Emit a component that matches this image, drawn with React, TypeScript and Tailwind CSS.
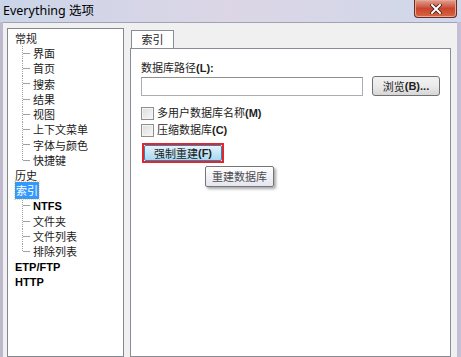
import React from "react";

const CJK = '"Noto Sans CJK SC", "Liberation Sans", sans-serif';
const LATIN = '"Liberation Sans", "Noto Sans CJK SC", sans-serif';

type Node = { label: string; bold?: boolean; selected?: boolean; children?: string[]; boldChildren?: string[] };

const TREE: Node[] = [
  { label: "常规", children: ["界面", "首页", "搜索", "结果", "视图", "上下文菜单", "字体与颜色", "快捷键"] },
  { label: "历史" },
  { label: "索引", selected: true, children: ["NTFS", "文件夹", "文件列表", "排除列表"], boldChildren: ["NTFS"] },
  { label: "ETP/FTP", bold: true },
  { label: "HTTP", bold: true },
];

function Connector({ last }: { last: boolean }) {
  return (
    <svg width="11" height="15.25" className="shrink-0">
      <line x1="0.5" y1="0" x2="0.5" y2={last ? 8 : 15.25} stroke="#a0a0a0" strokeDasharray="1 1" />
      <line x1="1" y1="7.5" x2="8" y2="7.5" stroke="#a0a0a0" />
    </svg>
  );
}

function Row({ text, bold, selected }: { text: string; bold?: boolean; selected?: boolean }) {
  const latin = /^[A-Z/]+$/.test(text);
  return (
    <span
      className={
        "whitespace-nowrap text-[11px] " +
        (bold ? "font-bold text-black " : "text-[#1a1a1a] ") +
        (selected ? "bg-[#3399ff] px-[1px] text-white outline outline-1 outline-dotted outline-[#f5d98a]" : "")
      }
      style={{ fontFamily: latin ? LATIN : CJK }}
    >
      {text}
    </span>
  );
}

// CJK text followed by a bold latin hotkey part, as in the dialog
function Label({ cjk, key_ }: { cjk: string; key_: string }) {
  return (
    <>
      <span style={{ fontFamily: CJK }}>{cjk}</span>
      <span className="font-bold" style={{ fontFamily: LATIN }}>
        {key_}
      </span>
    </>
  );
}

function Checkbox({ cjk, key_ }: { cjk: string; key_: string }) {
  return (
    <div className="flex h-[14px] items-center gap-[3px]">
      <span className="h-[13px] w-[13px] border border-[#8f8f8f] bg-gradient-to-br from-[#dcdcdc] to-[#f8f8f8] shadow-[inset_0_0_0_1px_#f4f4f4]" />
      <span className="text-[11px] text-[#222]">
        <Label cjk={cjk} key_={key_} />
      </span>
    </div>
  );
}

export default function App() {
  return (
    <div className="flex h-[357px] w-[461px] flex-col overflow-hidden bg-gradient-to-r from-[#bdb8cc] via-[#d6d3e2] to-[#c4bfd4]">
      {/* title bar */}
      <div className="flex h-[22px] shrink-0 items-start justify-between bg-gradient-to-r from-[#cbd5e8] via-[#dcd6e6] to-[#cfd8ea]">
        <span className="pl-[3px] pt-[3px] text-[12.5px] leading-[16px] text-black" style={{ fontFamily: '"Noto Sans", "Noto Sans CJK SC", sans-serif' }}>
          Everything 选项
        </span>
        <div className="mr-[4px] flex h-[18px] w-[43px] items-center justify-center rounded-b-[4px] border border-t-0 border-[#6b2a22] bg-gradient-to-b from-[#e0a092] via-[#c9452e] to-[#d6653f] shadow-[inset_0_0_0_1px_#e7a796]">
          <svg width="12" height="10" viewBox="0 0 12 10">
            <path d="M2 1 L10 9 M10 1 L2 9" stroke="#3a1a16" strokeWidth="3.6" strokeLinecap="square" />
            <path d="M2 1 L10 9 M10 1 L2 9" stroke="#ffffff" strokeWidth="2" strokeLinecap="square" />
          </svg>
        </div>
      </div>

      {/* client area */}
      <div className="mx-[3px] mr-[4px] flex flex-1 gap-[6px] border-t border-[#9fa3b4] bg-[#f0f0f0] pl-[4px] pr-[6px] pt-[5px]">
        {/* tree */}
        <div className="w-[117px] shrink-0 border border-[#828790] bg-white pt-[1.5px]">
          {TREE.map((n) => (
            <div key={n.label}>
              <div className="flex h-[15.25px] items-center pl-[7px]">
                <Row text={n.label} bold={n.bold} selected={n.selected} />
              </div>
              {n.children && (
                <div className="pl-[14px]">
                  {n.children.map((c, i) => (
                    <div key={c} className="flex h-[15.25px] items-center">
                      <Connector last={i === n.children!.length - 1} />
                      <Row text={c} bold={n.boldChildren?.includes(c)} />
                    </div>
                  ))}
                </div>
              )}
            </div>
          ))}
        </div>

        {/* tab area */}
        <div className="flex flex-1 flex-col pt-[2px]">
          <div className="ml-[1px] flex h-[18px] w-[43px] items-center justify-center border border-b-0 border-[#898c95] bg-white">
            <span className="text-[11px] text-[#222]" style={{ fontFamily: CJK }}>
              索引
            </span>
          </div>
          <div className="flex-1 border border-[#898c95] bg-white pl-[10px] pt-[11px]">
            <div className="h-[15px] text-[11px] leading-[15px] text-[#222]">
              <Label cjk="数据库路径" key_="(L):" />
            </div>
            <div className="mt-[1px] flex items-center gap-[9px]">
              <div className="h-[19px] w-[222px] border border-[#abadb3] border-t-[#8e8f8f] bg-white" />
              <button className="flex h-[20px] w-[68px] items-center justify-center rounded-[3px] border border-[#707070] bg-gradient-to-b from-[#f2f2f2] via-[#ebebeb] to-[#d6d6d6] text-[11px] text-[#222]">
                <Label cjk="浏览" key_="(B)..." />
              </button>
            </div>
            <div className="mt-[10px] flex flex-col gap-[3px]">
              <Checkbox cjk="多用户数据库名称" key_="(M)" />
              <Checkbox cjk="压缩数据库" key_="(C)" />
            </div>
            <div className="relative ml-[1px] mt-[6px] w-[82px] border-2 border-[#e3262c]">
              <button className="flex h-[16px] w-full items-center justify-center rounded-[2px] border border-[#3c7fb1] bg-gradient-to-b from-[#e5f4fc] via-[#c4e5f6] to-[#a8d8f2] text-[11px] text-[#222]">
                <Label cjk="强制重建" key_="(F)" />
              </button>
              <div
                className="absolute left-[61px] top-[21px] flex h-[21px] w-[69px] items-center justify-center rounded-[2px] border border-[#767676] bg-gradient-to-b from-white to-[#e4e5f0] text-[11px] text-[#4c4c4c] shadow-[2px_2px_3px_rgba(0,0,0,0.35)]"
                style={{ fontFamily: CJK }}
              >
                重建数据库
              </div>
            </div>
          </div>
        </div>
      </div>
    </div>
  );
}
